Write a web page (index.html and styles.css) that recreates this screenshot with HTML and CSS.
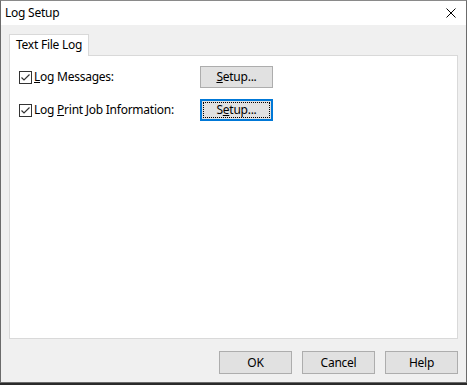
FILE: index.html
```html
<!DOCTYPE html>
<html lang="en">
<head>
  <meta charset="UTF-8">
  <title>Log Setup</title>
  <link rel="stylesheet" href="styles.css">
</head>
<body>
  <div class="window">
    <header class="title-bar">
      <span class="title">Log Setup</span>
      <svg class="close" width="10" height="10" viewBox="0 0 10 10">
        <path d="M0.5 0.5 L9.5 9.5 M9.5 0.5 L0.5 9.5" stroke="#000" stroke-width="1" fill="none"/>
      </svg>
    </header>

    <main class="client">
      <div class="tabs">
        <div class="tab active">Text File Log</div>
      </div>
      <section class="tab-panel">
        <div class="row">
          <label class="check">
            <span class="box">
              <svg width="11" height="11" viewBox="0 0 11 11"><path d="M1.5 5.5 L4 8 L9.5 2.5" stroke="#333" stroke-width="1.2" fill="none"/></svg>
            </span>
            <span><u>L</u>og Messages:</span>
          </label>
          <button class="btn"><u>S</u>etup...</button>
        </div>
        <div class="row">
          <label class="check">
            <span class="box">
              <svg width="11" height="11" viewBox="0 0 11 11"><path d="M1.5 5.5 L4 8 L9.5 2.5" stroke="#333" stroke-width="1.2" fill="none"/></svg>
            </span>
            <span>Log <u>P</u>rint Job Information:</span>
          </label>
          <button class="btn focused"><span class="focus-ring">S<u>e</u>tup...</span></button>
        </div>
      </section>

      <footer class="buttons">
        <button class="btn">OK</button>
        <button class="btn">Cancel</button>
        <button class="btn">Help</button>
      </footer>
    </main>
  </div>
</body>
</html>
```

FILE: styles.css
```css
/* ===== Base ===== */
* {
  margin: 0;
  padding: 0;
  box-sizing: border-box;
}

body {
  background: #2a2a2a;
  font-family: 'Noto Sans', 'Open Sans', sans-serif;
  font-size: 12px;
  letter-spacing: -0.25px;
  color: #000;
  width: 467px;
  height: 385px;
  overflow: hidden;
}

u {
  text-decoration: underline;
  text-underline-offset: 1px;
}

/* ===== Window ===== */
.window {
  width: 467px;
  height: 383px;
  border: 1px solid #6b6b6b;
  border-top-color: #8a8a8a;
  background: #f0f0f0;
  display: flex;
  flex-direction: column;
}

.title-bar {
  height: 25px;
  background: #fff;
  display: flex;
  align-items: center;
  justify-content: space-between;
  padding: 0 10px 0 4px;
}

.title {
  font-size: 12px;
  line-height: 16px;
}

.close {
  display: block;
}

/* ===== Client area ===== */
.client {
  flex: 1;
  padding: 9px 8px 8px 8px;
  display: flex;
  flex-direction: column;
}

.tabs {
  display: flex;
  height: 22px;
  position: relative;
  z-index: 1;
}

.tab {
  width: 80px;
  height: 22px;
  border: 1px solid #d9d9d9;
  border-bottom: none;
  background: #fff;
  padding: 2px 0 0 6px;
  line-height: 16px;
}

.tab-panel {
  height: 284px;
  margin-top: -1px;
  background: #fff;
  border: 1px solid #d9d9d9;
  padding: 10px 0 0 9px;
  display: flex;
  flex-direction: column;
  gap: 11px;
}

.row {
  display: flex;
  align-items: center;
  height: 22px;
}

.check {
  width: 181px;
  display: flex;
  align-items: center;
  gap: 2px;
  line-height: 16px;
}

.box {
  width: 13px;
  height: 13px;
  border: 1px solid #333;
  background: #fff;
  display: flex;
  align-items: center;
  justify-content: center;
}

.box svg {
  display: block;
}

/* ===== Buttons ===== */
.btn {
  width: 73px;
  height: 22px;
  background: #e1e1e1;
  border: 1px solid #adadad;
  font-family: inherit;
  font-size: 12px;
  letter-spacing: inherit;
  color: #000;
  line-height: 16px;
  display: flex;
  align-items: center;
  justify-content: center;
}

.btn.focused {
  border-color: #0078d7;
  box-shadow: inset 0 0 0 1px #0078d7;
  padding: 2px;
}

.focus-ring {
  flex: 1;
  align-self: stretch;
  outline: 1px dotted #000;
  outline-offset: -1px;
  display: flex;
  align-items: center;
  justify-content: center;
}

.buttons {
  margin-top: 12px;
  display: flex;
  justify-content: flex-end;
  gap: 10px;
}

.buttons .btn {
  height: 23px;
}
```
